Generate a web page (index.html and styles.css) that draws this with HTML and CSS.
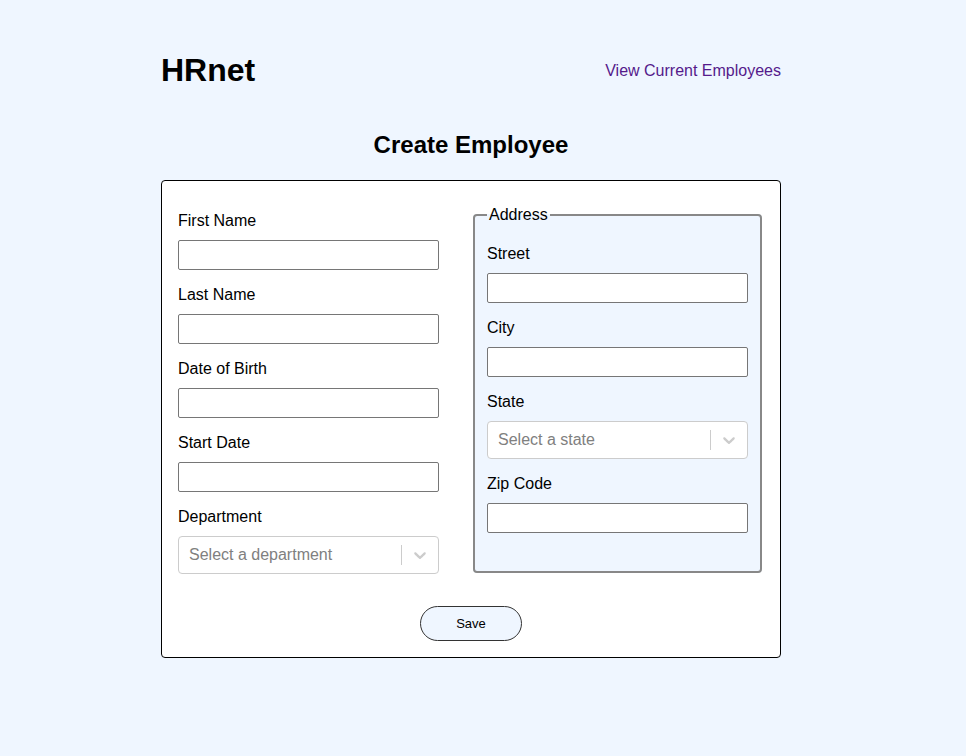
FILE: index.html
```html
<!DOCTYPE html>
<html lang="en">
<head>
<meta charset="utf-8">
<title>HRnet</title>
<link rel="stylesheet" href="styles.css">
</head>
<body>
<div class="page">
  <header class="header">
    <h1 class="logo">HRnet</h1>
    <a class="nav-link" href="#">View Current Employees</a>
  </header>
  <h2 class="title">Create Employee</h2>
  <form class="form">
    <div class="columns">
      <div class="col">
        <label class="label">First Name</label>
        <input class="input" type="text">
        <label class="label">Last Name</label>
        <input class="input" type="text">
        <label class="label">Date of Birth</label>
        <input class="input" type="text">
        <label class="label">Start Date</label>
        <input class="input" type="text">
        <label class="label">Department</label>
        <div class="select">
          <span class="placeholder">Select a department</span>
          <span class="sep"></span>
          <span class="indicator"><svg viewBox="0 0 20 20" width="20" height="20"><path fill="#cccccc" d="M4.516 7.548c0.436-0.446 1.043-0.481 1.576 0l3.908 3.747 3.908-3.747c0.533-0.481 1.141-0.446 1.574 0 0.436 0.445 0.408 1.197 0 1.615-0.406 0.418-4.695 4.502-4.695 4.502-0.217 0.223-0.502 0.335-0.787 0.335s-0.57-0.112-0.789-0.335c0 0-4.287-4.084-4.695-4.502s-0.436-1.17 0-1.615z"/></svg></span>
        </div>
      </div>
      <div class="col">
        <fieldset class="address">
          <legend class="legend">Address</legend>
          <label class="label">Street</label>
          <input class="input" type="text">
          <label class="label">City</label>
          <input class="input" type="text">
          <label class="label">State</label>
          <div class="select">
            <span class="placeholder">Select a state</span>
            <span class="sep"></span>
            <span class="indicator"><svg viewBox="0 0 20 20" width="20" height="20"><path fill="#cccccc" d="M4.516 7.548c0.436-0.446 1.043-0.481 1.576 0l3.908 3.747 3.908-3.747c0.533-0.481 1.141-0.446 1.574 0 0.436 0.445 0.408 1.197 0 1.615-0.406 0.418-4.695 4.502-4.695 4.502-0.217 0.223-0.502 0.335-0.787 0.335s-0.57-0.112-0.789-0.335c0 0-4.287-4.084-4.695-4.502s-0.436-1.17 0-1.615z"/></svg></span>
          </div>
          <label class="label">Zip Code</label>
          <input class="input" type="text">
        </fieldset>
      </div>
    </div>
    <div class="actions">
      <button class="save" type="button">Save</button>
    </div>
  </form>
</div>
</body>
</html>
```

FILE: styles.css
```css
html, body {
  margin: 0;
  padding: 0;
  background: #eff6ff;
  font-family: "Liberation Sans", Arial, sans-serif;
  color: #000;
}

.page {
  width: 620px;
  margin-left: 161px;
}

.header {
  display: flex;
  justify-content: space-between;
  align-items: center;
  padding-top: 52px;
}

.logo {
  margin: 0;
  font-size: 32px;
  line-height: 37px;
  font-weight: bold;
}

.nav-link {
  color: #551a8b;
  text-decoration: none;
  font-size: 16px;
  line-height: 18px;
}

.title {
  margin: 42px 0 21px;
  text-align: center;
  font-size: 24px;
  line-height: 28px;
  font-weight: bold;
}

.form {
  background: #fff;
  border: 1px solid #000;
  border-radius: 4px;
  padding: 15px 16px 16px;
}

.columns {
  display: grid;
  grid-template-columns: 1fr 1fr;
}

.col {
  display: flex;
  flex-direction: column;
}

.label {
  display: block;
  margin-top: 16px;
  margin-bottom: 10px;
  font-size: 16px;
  line-height: 18px;
}

.input {
  display: block;
  box-sizing: border-box;
  width: 261px;
  height: 30px;
  margin: 0;
  border: 1px solid #767676;
  border-radius: 2px;
  background: #fff;
}

.select {
  box-sizing: border-box;
  width: 261px;
  height: 38px;
  display: flex;
  align-items: center;
  border: 1px solid #cccccc;
  border-radius: 4px;
  background: #fff;
}

.placeholder {
  flex: 1;
  padding-left: 10px;
  font-size: 16px;
  color: #808080;
}

.sep {
  align-self: stretch;
  width: 1px;
  margin: 8px 0;
  background: #cccccc;
}

.indicator {
  display: flex;
  padding: 8px;
}

.address {
  flex: 1;
  margin: 10px 2px 1px;
  padding: 5px 12px 10px;
  border: 2px solid #888;
  border-radius: 4px;
  background: #eff6ff;
  min-width: 0;
}

.legend {
  padding: 0 2px;
  font-size: 16px;
  line-height: 18px;
}

.actions {
  display: flex;
  justify-content: center;
  margin-top: 32px;
}

.save {
  width: 102px;
  height: 35px;
  border: 1px solid #333;
  border-radius: 18px;
  background: #eff6ff;
  font-family: "Liberation Sans", Arial, sans-serif;
  font-size: 13px;
  color: #000;
}
```
